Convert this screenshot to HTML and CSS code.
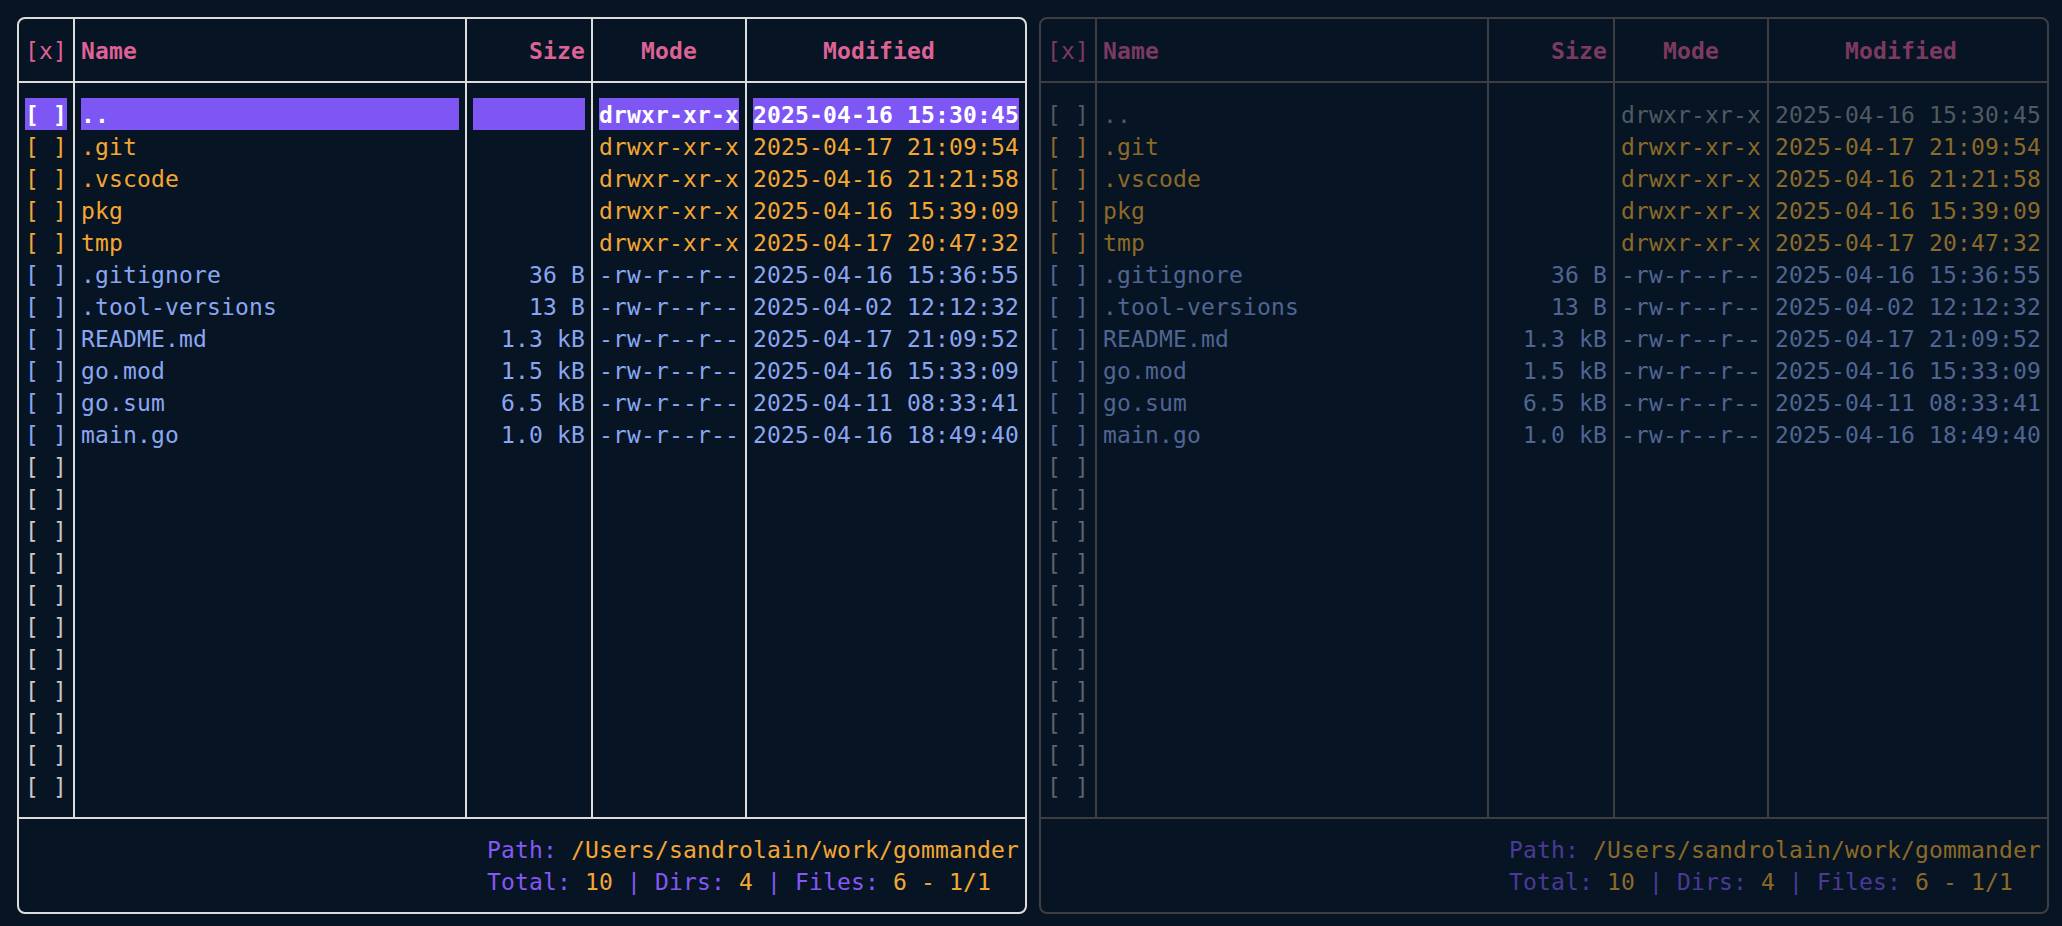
FILE: index.html
```html
<!DOCTYPE html>
<html>
<head>
<meta charset="utf-8">
<link rel="stylesheet" href="styles.css">
</head>
<body>
<div class="screen">
  <section class="panel active">
    <div class="table">
      <div class="col col-chk">
        <div class="head head-chk">[x]</div>
        <div class="cells">
          <div class="cell sel">[ ]</div>
          <div class="cell dir">[ ]</div>
          <div class="cell dir">[ ]</div>
          <div class="cell dir">[ ]</div>
          <div class="cell dir">[ ]</div>
          <div class="cell file">[ ]</div>
          <div class="cell file">[ ]</div>
          <div class="cell file">[ ]</div>
          <div class="cell file">[ ]</div>
          <div class="cell file">[ ]</div>
          <div class="cell file">[ ]</div>
          <div class="cell empty">[ ]</div>
          <div class="cell empty">[ ]</div>
          <div class="cell empty">[ ]</div>
          <div class="cell empty">[ ]</div>
          <div class="cell empty">[ ]</div>
          <div class="cell empty">[ ]</div>
          <div class="cell empty">[ ]</div>
          <div class="cell empty">[ ]</div>
          <div class="cell empty">[ ]</div>
          <div class="cell empty">[ ]</div>
          <div class="cell empty">[ ]</div>
        </div>
      </div>
      <div class="col col-name">
        <div class="head">Name</div>
        <div class="cells">
          <div class="cell sel">..</div>
          <div class="cell dir">.git</div>
          <div class="cell dir">.vscode</div>
          <div class="cell dir">pkg</div>
          <div class="cell dir">tmp</div>
          <div class="cell file">.gitignore</div>
          <div class="cell file">.tool-versions</div>
          <div class="cell file">README.md</div>
          <div class="cell file">go.mod</div>
          <div class="cell file">go.sum</div>
          <div class="cell file">main.go</div>
        </div>
      </div>
      <div class="col col-size">
        <div class="head">Size</div>
        <div class="cells">
          <div class="cell sel"></div>
          <div class="cell dir"></div>
          <div class="cell dir"></div>
          <div class="cell dir"></div>
          <div class="cell dir"></div>
          <div class="cell file">36 B</div>
          <div class="cell file">13 B</div>
          <div class="cell file">1.3 kB</div>
          <div class="cell file">1.5 kB</div>
          <div class="cell file">6.5 kB</div>
          <div class="cell file">1.0 kB</div>
        </div>
      </div>
      <div class="col col-mode">
        <div class="head">Mode</div>
        <div class="cells">
          <div class="cell sel">drwxr-xr-x</div>
          <div class="cell dir">drwxr-xr-x</div>
          <div class="cell dir">drwxr-xr-x</div>
          <div class="cell dir">drwxr-xr-x</div>
          <div class="cell dir">drwxr-xr-x</div>
          <div class="cell file">-rw-r--r--</div>
          <div class="cell file">-rw-r--r--</div>
          <div class="cell file">-rw-r--r--</div>
          <div class="cell file">-rw-r--r--</div>
          <div class="cell file">-rw-r--r--</div>
          <div class="cell file">-rw-r--r--</div>
        </div>
      </div>
      <div class="col col-date">
        <div class="head head-date">Modified</div>
        <div class="cells">
          <div class="cell sel">2025-04-16 15:30:45</div>
          <div class="cell dir">2025-04-17 21:09:54</div>
          <div class="cell dir">2025-04-16 21:21:58</div>
          <div class="cell dir">2025-04-16 15:39:09</div>
          <div class="cell dir">2025-04-17 20:47:32</div>
          <div class="cell file">2025-04-16 15:36:55</div>
          <div class="cell file">2025-04-02 12:12:32</div>
          <div class="cell file">2025-04-17 21:09:52</div>
          <div class="cell file">2025-04-16 15:33:09</div>
          <div class="cell file">2025-04-11 08:33:41</div>
          <div class="cell file">2025-04-16 18:49:40</div>
        </div>
      </div>
    </div>
    <footer class="footer">
      <div class="info">
        <div class="line"><span class="lbl">Path:</span> <span class="val">/Users/sandrolain/work/gommander</span></div>
        <div class="line"><span class="lbl">Total:</span> <span class="val">10</span> <span class="lbl">| Dirs:</span> <span class="val">4</span> <span class="lbl">| Files:</span> <span class="val">6 - 1/1</span></div>
      </div>
    </footer>
  </section>

  <section class="panel inactive">
    <div class="table">
      <div class="col col-chk">
        <div class="head head-chk">[x]</div>
        <div class="cells">
          <div class="cell up">[ ]</div>
          <div class="cell dir">[ ]</div>
          <div class="cell dir">[ ]</div>
          <div class="cell dir">[ ]</div>
          <div class="cell dir">[ ]</div>
          <div class="cell file">[ ]</div>
          <div class="cell file">[ ]</div>
          <div class="cell file">[ ]</div>
          <div class="cell file">[ ]</div>
          <div class="cell file">[ ]</div>
          <div class="cell file">[ ]</div>
          <div class="cell empty">[ ]</div>
          <div class="cell empty">[ ]</div>
          <div class="cell empty">[ ]</div>
          <div class="cell empty">[ ]</div>
          <div class="cell empty">[ ]</div>
          <div class="cell empty">[ ]</div>
          <div class="cell empty">[ ]</div>
          <div class="cell empty">[ ]</div>
          <div class="cell empty">[ ]</div>
          <div class="cell empty">[ ]</div>
          <div class="cell empty">[ ]</div>
        </div>
      </div>
      <div class="col col-name">
        <div class="head">Name</div>
        <div class="cells">
          <div class="cell up">..</div>
          <div class="cell dir">.git</div>
          <div class="cell dir">.vscode</div>
          <div class="cell dir">pkg</div>
          <div class="cell dir">tmp</div>
          <div class="cell file">.gitignore</div>
          <div class="cell file">.tool-versions</div>
          <div class="cell file">README.md</div>
          <div class="cell file">go.mod</div>
          <div class="cell file">go.sum</div>
          <div class="cell file">main.go</div>
        </div>
      </div>
      <div class="col col-size">
        <div class="head">Size</div>
        <div class="cells">
          <div class="cell up"></div>
          <div class="cell dir"></div>
          <div class="cell dir"></div>
          <div class="cell dir"></div>
          <div class="cell dir"></div>
          <div class="cell file">36 B</div>
          <div class="cell file">13 B</div>
          <div class="cell file">1.3 kB</div>
          <div class="cell file">1.5 kB</div>
          <div class="cell file">6.5 kB</div>
          <div class="cell file">1.0 kB</div>
        </div>
      </div>
      <div class="col col-mode">
        <div class="head">Mode</div>
        <div class="cells">
          <div class="cell up">drwxr-xr-x</div>
          <div class="cell dir">drwxr-xr-x</div>
          <div class="cell dir">drwxr-xr-x</div>
          <div class="cell dir">drwxr-xr-x</div>
          <div class="cell dir">drwxr-xr-x</div>
          <div class="cell file">-rw-r--r--</div>
          <div class="cell file">-rw-r--r--</div>
          <div class="cell file">-rw-r--r--</div>
          <div class="cell file">-rw-r--r--</div>
          <div class="cell file">-rw-r--r--</div>
          <div class="cell file">-rw-r--r--</div>
        </div>
      </div>
      <div class="col col-date">
        <div class="head head-date">Modified</div>
        <div class="cells">
          <div class="cell up">2025-04-16 15:30:45</div>
          <div class="cell dir">2025-04-17 21:09:54</div>
          <div class="cell dir">2025-04-16 21:21:58</div>
          <div class="cell dir">2025-04-16 15:39:09</div>
          <div class="cell dir">2025-04-17 20:47:32</div>
          <div class="cell file">2025-04-16 15:36:55</div>
          <div class="cell file">2025-04-02 12:12:32</div>
          <div class="cell file">2025-04-17 21:09:52</div>
          <div class="cell file">2025-04-16 15:33:09</div>
          <div class="cell file">2025-04-11 08:33:41</div>
          <div class="cell file">2025-04-16 18:49:40</div>
        </div>
      </div>
    </div>
    <footer class="footer">
      <div class="info">
        <div class="line"><span class="lbl">Path:</span> <span class="val">/Users/sandrolain/work/gommander</span></div>
        <div class="line"><span class="lbl">Total:</span> <span class="val">10</span> <span class="lbl">| Dirs:</span> <span class="val">4</span> <span class="lbl">| Files:</span> <span class="val">6 - 1/1</span></div>
      </div>
    </footer>
  </section>
</div>
</body>
</html>
```

FILE: styles.css
```css
html, body {
  margin: 0;
  padding: 0;
  background: #071424;
  overflow: hidden;
}

body {
  font-family: "DejaVu Sans Mono", "Liberation Mono", monospace;
  font-size: 23px;
  letter-spacing: 0.15px;
  color: #c8c8c8;
}

.screen {
  display: flex;
  gap: 12px;
  padding: 17px;
}

.panel {
  box-sizing: border-box;
  width: 1010px;
  height: 897px;
  border: 2px solid #dcdcdc;
  border-radius: 8px;
  display: flex;
  flex-direction: column;
}

.table {
  display: flex;
  height: 798px;
}

.col {
  box-sizing: border-box;
  display: flex;
  flex-direction: column;
  border-right: 2px solid #dcdcdc;
}

.col:last-child {
  border-right: none;
}

.col-chk { width: 56px; }
.col-name { width: 392px; }
.col-size { width: 126px; }
.col-mode { width: 154px; }
.col-date { width: 278px; }

.head {
  box-sizing: border-box;
  height: 64px;
  border-bottom: 2px solid #dcdcdc;
  display: flex;
  align-items: center;
  padding: 2px 6px 0;
  font-weight: bold;
  color: #de6294;
  white-space: pre;
}

.head-chk {
  font-weight: normal;
}

.col-size .head {
  justify-content: flex-end;
}

.col-mode .head {
  justify-content: center;
}

.head-date {
  padding-left: 76px;
}

.cells {
  flex: 1;
  padding: 15px 6px;
}

.cell {
  height: 32px;
  line-height: 32px;
  padding-top: 1px;
  box-sizing: border-box;
  white-space: pre;
}

.col-size .cell {
  text-align: right;
}

.cell.dir { color: #f4a732; }
.cell.file { color: #8aa6f2; }
.cell.empty { color: #c8c8c8; }

.cell.sel {
  background: #7d56f4;
  color: #ffffff;
  font-weight: bold;
}

.footer {
  flex: 1;
  border-top: 2px solid #dcdcdc;
  padding: 15px 6px 14px;
  display: flex;
  flex-direction: column;
  align-items: flex-end;
}

.line {
  height: 32px;
  line-height: 32px;
  white-space: pre;
}

.lbl { color: #8458f5; }
.val { color: #f4a732; }

/* inactive panel */
.inactive,
.inactive .col,
.inactive .head,
.inactive .footer {
  border-color: #3c3e41;
}

.inactive .head { color: #7d3a60; }
.inactive .cell.up { color: #4f5a63; }
.inactive .cell.dir { color: #8c6a27; }
.inactive .cell.file { color: #4f6592; }
.inactive .cell.empty { color: #5a646d; }
.inactive .lbl { color: #4a3a98; }
.inactive .val { color: #8c6a27; }
```
